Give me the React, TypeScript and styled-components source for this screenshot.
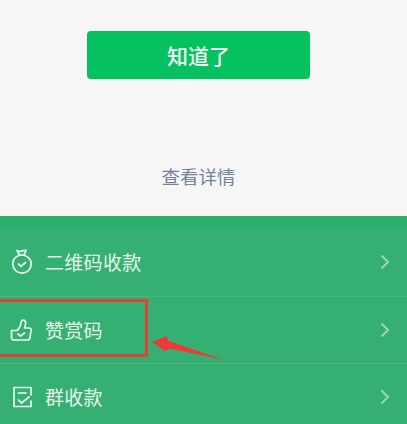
import React from "react";
import styled, { createGlobalStyle } from "styled-components";

const Global = createGlobalStyle`
  html, body { margin: 0; padding: 0; background: #f6f6f6; }
  body { width: 407px; height: 424px; overflow: hidden; font-family: "Noto Sans CJK SC", "Noto Sans", sans-serif; }
`;

const Page = styled.div`
  width: 407px;
  height: 424px;
  overflow: hidden;
  display: flex;
  flex-direction: column;
  position: relative;
`;

const Notice = styled.section`
  height: 216px;
  flex: none;
  background: #f6f6f6;
  display: flex;
  flex-direction: column;
  align-items: center;
  padding: 31px 10px 0 0;
  box-sizing: border-box;
`;

const ConfirmButton = styled.button`
  width: 223px;
  height: 48px;
  border: 0;
  border-radius: 4px;
  background: #06c160;
  color: #f2fbf6;
  font: 500 21px/48px "Noto Sans CJK SC", sans-serif;
  padding: 0;
`;

const DetailLink = styled.a`
  margin-top: 83px;
  color: #75829a;
  font-size: 18.5px;
  line-height: 28px;
`;

const Menu = styled.section`
  flex: 1;
  background: #36b072;
  border-top: 12px solid #2bae68;
`;

const Row = styled.div`
  height: 67.5px;
  box-sizing: border-box;
  display: flex;
  align-items: center;
  padding: 0 17px 0 10px;
  color: #e6f5ec;
  & + & { border-top: 1px solid #49b880; }
`;

const IconSlot = styled.span`
  width: 24px;
  height: 26px;
  flex: none;
  color: #eaf7f0;
  margin-right: 11px;
  svg { display: block; }
`;

const Label = styled.span`
  flex: 1;
  font-size: 19px;
  line-height: 28px;
  letter-spacing: 0.3px;
`;

const Chevron = styled.svg`
  width: 10px;
  height: 16px;
  flex: none;
  color: #9ad6b6;
`;

const Highlight = styled.div`
  position: absolute;
  left: -3px;
  top: 299px;
  width: 145px;
  height: 52px;
  border: 3px solid #e2413a;
`;

const Arrow = styled.svg`
  position: absolute;
  left: 152px;
  top: 336px;
  width: 72px;
  height: 25px;
`;

const Icon = ({ children }: { children: React.ReactNode }) => (
  <IconSlot>
    <svg width="24" height="26" viewBox="0 0 24 26" fill="none" stroke="currentColor" strokeWidth="1.7" strokeLinecap="round" strokeLinejoin="round">
      {children}
    </svg>
  </IconSlot>
);

const Next = () => (
  <Chevron viewBox="0 0 10 16" fill="none" stroke="currentColor" strokeWidth="2">
    <path d="M1.5 1.5 8 8l-6.5 6.5" />
  </Chevron>
);

export default function App() {
  return (
    <>
      <Global />
      <Page>
        <Notice>
          <ConfirmButton>知道了</ConfirmButton>
          <DetailLink>查看详情</DetailLink>
        </Notice>
        <Menu>
          <Row>
            <Icon>
              <path d="M7 1.5c2 1.2 3.500 1.200 5 .4 1.200-.6 2.600-.7 4-.4l-2 4.700H9.500z" />
              <path d="M9.500 6.200C5.500 7.600 2.800 10.800 2.800 15a9.200 9.200 0 0 0 18.400 0c0-4.200-2.700-7.400-7.200-8.800" />
              <path d="m8.500 15 2.500 2.300 4.500-3.800" />
            </Icon>
            <Label>二维码收款</Label>
            <Next />
          </Row>
          <Row>
            <Icon>
              <path d="M1.500 13.500h5.500c2-1.700 3.500-4 4-7.500.3-2 1-3 2.200-3 1.700 0 2.400 1.400 2.400 3 0 1.700-.5 3.500-1 5h4.700c1.200 0 2 1 1.800 2.200l-1.200 7.600c-.2 1.300-1 2.200-2.400 2.200H4c-1.500 0-2.500-1-2.500-2.500z" />
              <path d="m8 17 2.500 2.200 4-3.200" />
            </Icon>
            <Label>赞赏码</Label>
            <Next />
          </Row>
          <Row>
            <Icon>
              <path d="M21 11V3.500H4v19h17V17" />
              <path d="M8.500 9h7.500" />
              <path d="m8.500 16 3 3 7.500-6" />
            </Icon>
            <Label>群收款</Label>
            <Next />
          </Row>
        </Menu>
        <Highlight />
        <Arrow viewBox="0 0 72 25">
          <path d="M0 6 15 0l.5 4.500L72 24 18 12.500 13 15z" fill="#f0383a" />
        </Arrow>
      </Page>
    </>
  );
}
